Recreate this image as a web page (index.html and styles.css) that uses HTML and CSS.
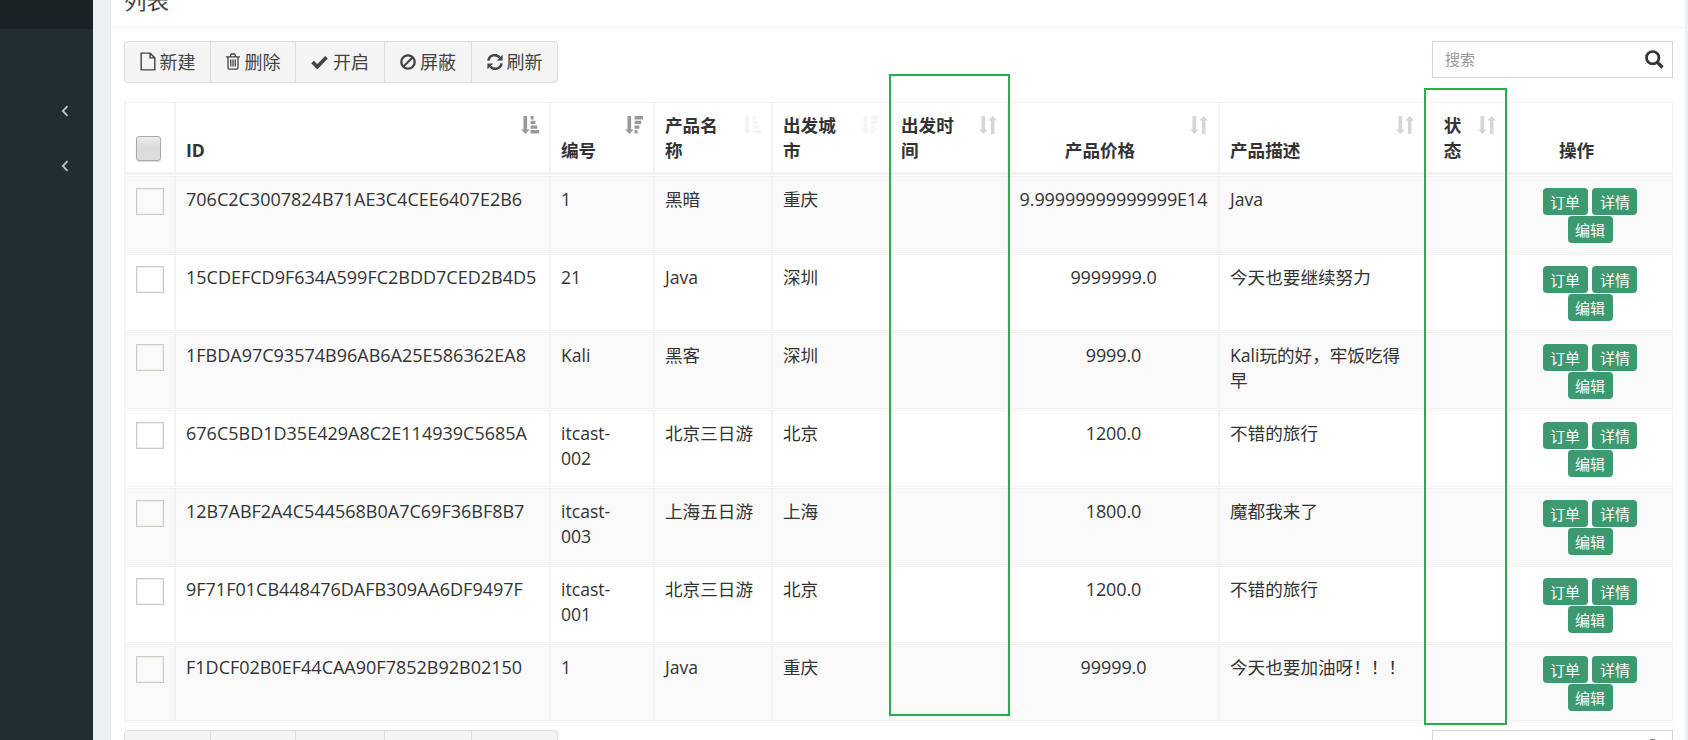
FILE: index.html
```
<!DOCTYPE html>
<html lang="zh-CN">
  <head>
    <meta charset="UTF-8" />
    <meta name="viewport" content="width=device-width, initial-scale=1.0" />
    <title>列表</title>
    <link rel="stylesheet" href="styles.css">
  </head>
  <body>
    <!-- icons -->
    <svg class="sprite">
      <symbol id="i-angle" viewBox="0 0 8 12"><path d="M6.5 1.2 1.8 6l4.7 4.8" fill="none" stroke="currentColor" stroke-width="1.8" /></symbol>
      <symbol id="i-file" viewBox="0 0 16 20"><path d="M.8 1.2h9.4l5 5v12.6H.8zM10.2 1.2v5h5" fill="none" stroke="currentColor" stroke-width="1.5" /></symbol>
      <symbol id="i-trash" viewBox="0 0 14 17"><path d="M0 3.8h14M4.3 3.5l1-2.5h3.4l1 2.5M2 4v10.5c0 1 .5 1.6 1.2 1.6h7.6c.7 0 1.2-.6 1.2-1.6V4M4.8 6.5v7M7 6.5v7M9.2 6.5v7" fill="none" stroke="currentColor" stroke-width="1.3" /></symbol>
      <symbol id="i-check" viewBox="0 0 17 14"><path d="M1.5 7 6.3 11.8 15.5 2.3" fill="none" stroke="currentColor" stroke-width="3.7" /></symbol>
      <symbol id="i-ban" viewBox="0 0 16 16"><circle cx="8" cy="8" r="6.7" fill="none" stroke="currentColor" stroke-width="2.3" /><path d="M3.5 12.5l9-9" stroke="currentColor" stroke-width="2.2" /></symbol>
      <symbol id="i-refresh" viewBox="0 0 16 16"><path d="M1.4 6.6A6.3 6.3 0 0 1 12.6 3.6M14.6 9.4A6.3 6.3 0 0 1 3.4 12.4" fill="none" stroke="currentColor" stroke-width="2.5" /><path d="M15.6.8v5.8H9.8zM.4 15.2V9.4h5.8z" fill="currentColor" /></symbol>
      <symbol id="i-search" viewBox="0 0 19 19"><circle cx="7.7" cy="7.7" r="6.2" fill="none" stroke="currentColor" stroke-width="2.7" /><path d="M12 12l5.5 5.5" stroke="currentColor" stroke-width="3.2" /></symbol>
      <symbol id="i-asc" viewBox="0 0 18 18"><path d="M2.5 0h3.6v13.5h2.6L4.3 18 0 13.5h2.5zM9.6 0h3v3.4h-3zM9.6 4.7h4.8v3.4H9.6zM9.6 9.4h6.6v3.4H9.6zM9.6 14.1H18v3.4H9.6z" fill="currentColor" /></symbol>
      <symbol id="i-desc" viewBox="0 0 18 18"><path d="M2.5 0h3.6v13.5h2.6L4.3 18 0 13.5h2.5zM9.6 0H18v3.4H9.6zM9.6 4.7h6.6v3.4H9.6zM9.6 9.4h4.8v3.4H9.6zM9.6 14.1h3v3.4h-3z" fill="currentColor" /></symbol>
      <symbol id="i-both" viewBox="0 0 18 18"><path d="M2.5 0h3.6v13.5h2.6L4.3 18 0 13.5h2.5zM11.9 18h3.6V4.5H18L13.7 0 9.3 4.5h2.6z" fill="currentColor" /></symbol>
    </svg>

    <div class="wrapper">
      <aside class="sidebar">
        <div class="sidebar-head"></div>
        <ul class="sidebar-menu">
          <li><svg><use href="#i-angle" /></svg></li>
          <li><svg><use href="#i-angle" /></svg></li>
        </ul>
      </aside>

      <div class="box">
        <div class="box-header"><h3>列表</h3></div>
        <div class="box-body">
          <div class="tools">
            <div class="btn-group">
              <button class="b1"><svg class="file"><use href="#i-file" /></svg>新建</button>
              <button class="b2"><svg class="trash"><use href="#i-trash" /></svg>删除</button>
              <button class="b3"><svg class="check"><use href="#i-check" /></svg>开启</button>
              <button class="b4"><svg class="ban"><use href="#i-ban" /></svg>屏蔽</button>
              <button class="b5"><svg class="refresh"><use href="#i-refresh" /></svg>刷新</button>
            </div>
            <div class="search"><input type="text" placeholder="搜索" /><svg><use href="#i-search" /></svg></div>
          </div>

          <table>
            <colgroup>
              <col class="c-check" /><col class="c-id" /><col class="c-num" /><col class="c-name" /><col class="c-city" />
              <col class="c-time" /><col class="c-price" /><col class="c-desc" /><col class="c-status" /><col class="c-ops" />
            </colgroup>
            <thead>
              <tr>
                <th class="pick"><span class="check-all"></span></th>
                <th>ID<svg class="sort"><use href="#i-asc" /></svg></th>
                <th>编号<svg class="sort"><use href="#i-desc" /></svg></th>
                <th>产品名称<svg class="sort off"><use href="#i-asc" /></svg></th>
                <th>出发城市<svg class="sort off"><use href="#i-desc" /></svg></th>
                <th>出发时间<svg class="sort both"><use href="#i-both" /></svg></th>
                <th class="center">产品价格<svg class="sort both"><use href="#i-both" /></svg></th>
                <th>产品描述<svg class="sort both"><use href="#i-both" /></svg></th>
                <th class="center">状态<svg class="sort both"><use href="#i-both" /></svg></th>
                <th class="center">操作</th>
              </tr>
            </thead>
            <tbody>
              <tr>
                <td class="pick"><input type="checkbox" /></td>
                <td class="id">706C2C3007824B71AE3C4CEE6407E2B6</td>
                <td class="num">1</td><td>黑暗</td><td>重庆</td><td></td>
                <td class="center price">9.99999999999999E14</td><td>Java</td><td></td>
                <td class="ops"><button>订单</button> <button>详情</button> <button>编辑</button></td>
              </tr>
              <tr>
                <td class="pick"><input type="checkbox" /></td>
                <td class="id">15CDEFCD9F634A599FC2BDD7CED2B4D5</td>
                <td class="num">21</td><td>Java</td><td>深圳</td><td></td>
                <td class="center price">9999999.0</td><td>今天也要继续努力</td><td></td>
                <td class="ops"><button>订单</button> <button>详情</button> <button>编辑</button></td>
              </tr>
              <tr>
                <td class="pick"><input type="checkbox" /></td>
                <td class="id">1FBDA97C93574B96AB6A25E586362EA8</td>
                <td class="num">Kali</td><td>黑客</td><td>深圳</td><td></td>
                <td class="center price">9999.0</td><td>Kali玩的好，牢饭吃得早</td><td></td>
                <td class="ops"><button>订单</button> <button>详情</button> <button>编辑</button></td>
              </tr>
              <tr>
                <td class="pick"><input type="checkbox" /></td>
                <td class="id">676C5BD1D35E429A8C2E114939C5685A</td>
                <td class="num">itcast-002</td><td>北京三日游</td><td>北京</td><td></td>
                <td class="center price">1200.0</td><td>不错的旅行</td><td></td>
                <td class="ops"><button>订单</button> <button>详情</button> <button>编辑</button></td>
              </tr>
              <tr>
                <td class="pick"><input type="checkbox" /></td>
                <td class="id">12B7ABF2A4C544568B0A7C69F36BF8B7</td>
                <td class="num">itcast-003</td><td>上海五日游</td><td>上海</td><td></td>
                <td class="center price">1800.0</td><td>魔都我来了</td><td></td>
                <td class="ops"><button>订单</button> <button>详情</button> <button>编辑</button></td>
              </tr>
              <tr>
                <td class="pick"><input type="checkbox" /></td>
                <td class="id">9F71F01CB448476DAFB309AA6DF9497F</td>
                <td class="num">itcast-001</td><td>北京三日游</td><td>北京</td><td></td>
                <td class="center price">1200.0</td><td>不错的旅行</td><td></td>
                <td class="ops"><button>订单</button> <button>详情</button> <button>编辑</button></td>
              </tr>
              <tr>
                <td class="pick"><input type="checkbox" /></td>
                <td class="id">F1DCF02B0EF44CAA90F7852B92B02150</td>
                <td class="num">1</td><td>Java</td><td>重庆</td><td></td>
                <td class="center price">99999.0</td><td>今天也要加油呀！！！</td><td></td>
                <td class="ops"><button>订单</button> <button>详情</button> <button>编辑</button></td>
              </tr>
            </tbody>
          </table>

          <div class="tools">
            <div class="btn-group">
              <button class="b1"></button>
              <button class="b2"></button>
              <button class="b3"></button>
              <button class="b4"></button>
              <button class="b5"></button>
            </div>
            <div class="search"><input type="text" /><svg><use href="#i-search" /></svg></div>
          </div>
        </div>
      </div>
    </div>

    <!-- marks over the empty columns -->
    <div class="mark mark-time"></div>
    <div class="mark mark-status"></div>
  </body>
</html>
```

FILE: styles.css
```
* {
  box-sizing: border-box;
}
body {
  margin: 0;
  height: 740px;
  overflow: hidden;
  position: relative;
  font-family: "Open Sans", "Noto Sans CJK SC", sans-serif;
  font-size: 17.6px;
  line-height: 25px;
  color: #333;
  background-color: #ecf0f5;
}
.sprite {
  display: none;
}
.wrapper {
  display: flex;
  height: 740px;
}
.sidebar {
  width: 93px;
  background-color: #222d32;
}
.sidebar-head {
  height: 29px;
  background-color: #1a2226;
}
.sidebar-menu {
  list-style: none;
  margin: 0;
  padding: 54px 24px 0 0;
}
.sidebar-menu li {
  height: 55px;
  display: flex;
  align-items: center;
  justify-content: flex-end;
  color: #b8c7ce;
}
.sidebar-menu svg {
  width: 8px;
  height: 12px;
}
.box {
  width: 1575px;
  height: 740px;
  margin-left: 17px;
  overflow: hidden;
  background-color: white;
  border-left: 1px solid #e4e8ee;
}
.box-header {
  height: 28px;
  border-bottom: 1px solid #f4f4f4;
  padding-left: 13px;
  overflow: hidden;
}
h3 {
  margin: -12px 0 0;
  font-size: 22.5px;
  font-weight: normal;
  line-height: 25px;
  color: #444;
}
.box-body {
  padding: 13px 12px 0 13px;
}
.tools {
  display: flex;
  justify-content: space-between;
  align-items: flex-start;
}
.btn-group {
  display: flex;
  width: 434px;
  height: 42px;
  border: 1px solid #ddd;
  border-radius: 4px;
  background-color: #f4f4f4;
}
.btn-group button {
  display: flex;
  align-items: center;
  justify-content: center;
  padding: 0 0 3px;
  border: none;
  border-right: 1px solid #ddd;
  background: none;
  font-family: inherit;
  font-size: 18px;
  color: #444;
}
.btn-group svg {
  position: relative;
  top: 1px;
}
.btn-group .b1 {
  width: 86px;
}
.btn-group .b2 {
  width: 85px;
}
.btn-group .b3 {
  width: 89px;
}
.btn-group .b4 {
  width: 87px;
}
.btn-group .b5 {
  width: 85px;
  border-right: none;
}
.file {
  width: 16px;
  height: 19px;
  margin-right: 4px;
}
.trash {
  width: 14px;
  height: 17px;
  margin-right: 5px;
}
.check {
  width: 17px;
  height: 14px;
  margin-right: 5px;
}
.ban,
.refresh {
  width: 16px;
  height: 16px;
  margin-right: 4px;
}
.search {
  width: 241px;
  height: 37px;
  display: flex;
  align-items: center;
  padding: 0 8px 1px 12px;
  border: 1px solid #d2d6de;
}
.search input {
  flex: 1;
  min-width: 0;
  padding: 0;
  border: none;
  outline: none;
  font-family: inherit;
  font-size: 15px;
}
.search input::placeholder {
  color: #999;
}
.search svg {
  width: 19px;
  height: 19px;
  color: #333;
}
table {
  width: 1549px;
  margin: 18px 0 7px;
  table-layout: fixed;
  border-collapse: separate;
  border-spacing: 0 1px;
  border-left: 1px solid #f4f4f4;
  border-bottom: 1px solid #f4f4f4;
}
.c-check {
  width: 50px;
}
.c-id {
  width: 375px;
}
.c-num {
  width: 104px;
}
.c-name,
.c-city {
  width: 118px;
}
.c-time {
  width: 118px;
}
.c-price {
  width: 211px;
}
.c-desc {
  width: 206px;
}
.c-status {
  width: 82px;
}
.c-ops {
  width: 166px;
}
th,
td {
  border: 1px solid #f2f2f2;
  text-align: left;
}
th {
  position: relative;
  height: 73px;
  padding: 9px 37px 9px 10px;
  border-bottom-width: 3px;
  vertical-align: bottom;
}
td {
  height: 77px;
  padding: 10px 10px 0;
  vertical-align: top;
}
tbody tr:nth-child(odd) {
  background-color: #f9f9f9;
}
.center {
  text-align: center;
}
.id {
  font-size: 18px;
  white-space: nowrap;
}
.num {
  padding-right: 20px;
}
.price {
  font-size: 18px;
  letter-spacing: -0.1px;
  padding-left: 0;
  padding-right: 0;
}
.pick {
  padding-right: 0;
}
th.pick {
  padding-bottom: 11px;
}
.check-all {
  display: block;
  width: 25px;
  height: 25px;
  border: 1px solid #a9a9a9;
  border-radius: 3px;
  background: linear-gradient(#ececec, #dcdcdc 40%);
  box-shadow: 0 1px 1px rgba(0, 0, 0, 0.15);
}
td input {
  appearance: none;
  display: block;
  width: 28px;
  height: 27px;
  margin: 1px 0 0;
  border: 1px solid #d0cbc4;
  box-shadow: inset 0 0 0 1px #efedea;
}
/* sort icon in the top corner of a header cell */
.sort {
  position: absolute;
  top: 13px;
  right: 10px;
  width: 18px;
  height: 18px;
  color: #999;
}
.sort.off {
  color: #f4f4f4;
}
.sort.both {
  color: #d6d6d6;
}
.ops {
  padding: 11px 30px 0;
  text-align: center;
  line-height: 28px;
  word-spacing: 0.4px;
}
.ops button {
  width: 45px;
  height: 27px;
  padding: 0;
  border: none;
  border-radius: 4px;
  background-color: #3d9970;
  color: white;
  font-family: inherit;
  font-size: 15px;
  line-height: 26px;
  vertical-align: top;
}
.mark {
  position: absolute;
  border: 2px solid #22b14c;
}
.mark-time {
  left: 889px;
  top: 74px;
  width: 121px;
  height: 642px;
}
.mark-status {
  left: 1424px;
  top: 88px;
  width: 83px;
  height: 637px;
}
```
